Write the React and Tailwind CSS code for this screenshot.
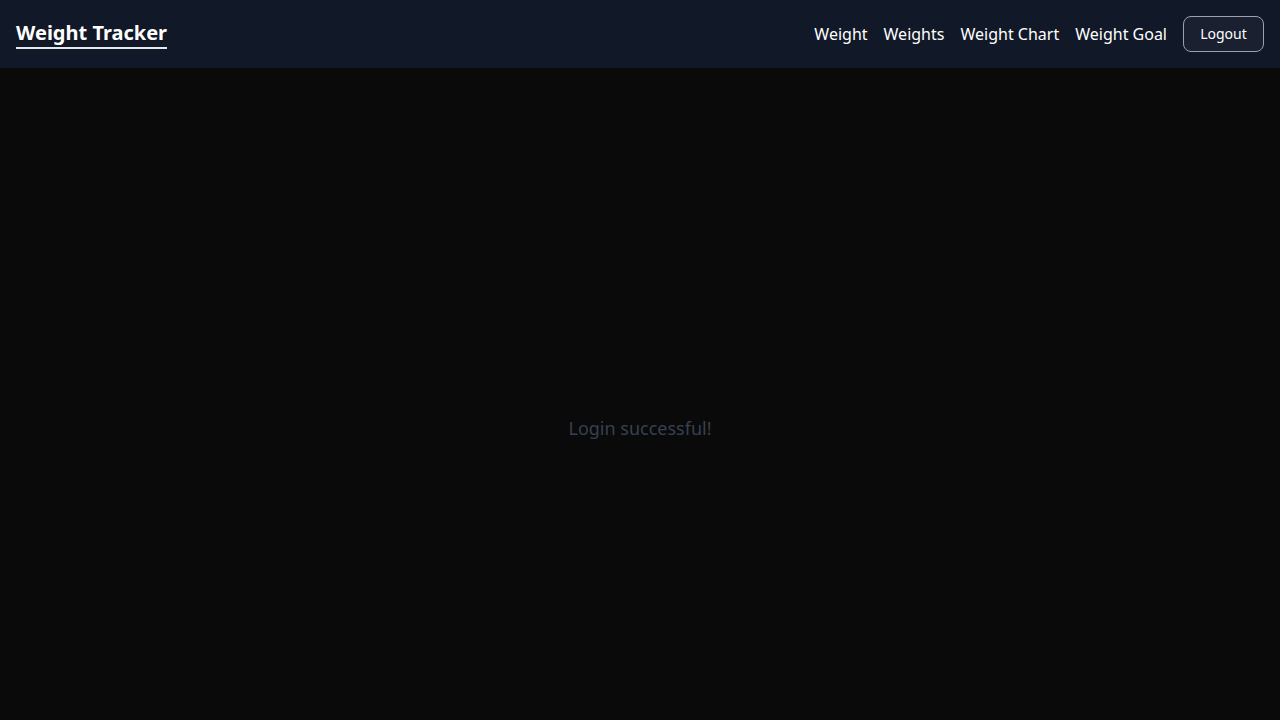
export default function App() {
  const links = ["Weight", "Weights", "Weight Chart", "Weight Goal"];

  return (
    <div className="min-h-screen bg-[#0a0a0a] font-['Noto_Sans',sans-serif]">
      <header className="flex h-[68px] items-center justify-between bg-[#111827] px-4">
        <a className="border-b-2 border-gray-200 text-xl font-bold leading-[28px] text-white">
          Weight Tracker
        </a>
        <nav className="flex items-center gap-4">
          {links.map((l) => (
            <a key={l} className="text-base text-white">
              {l}
            </a>
          ))}
          <button className="h-9 w-[81px] rounded-lg border border-gray-400 bg-[#1a2030] text-sm text-white">
            Logout
          </button>
        </nav>
      </header>
      <main className="flex min-h-screen items-center justify-center">
        <p className="text-lg text-[#374151]">Login successful!</p>
      </main>
    </div>
  );
}
